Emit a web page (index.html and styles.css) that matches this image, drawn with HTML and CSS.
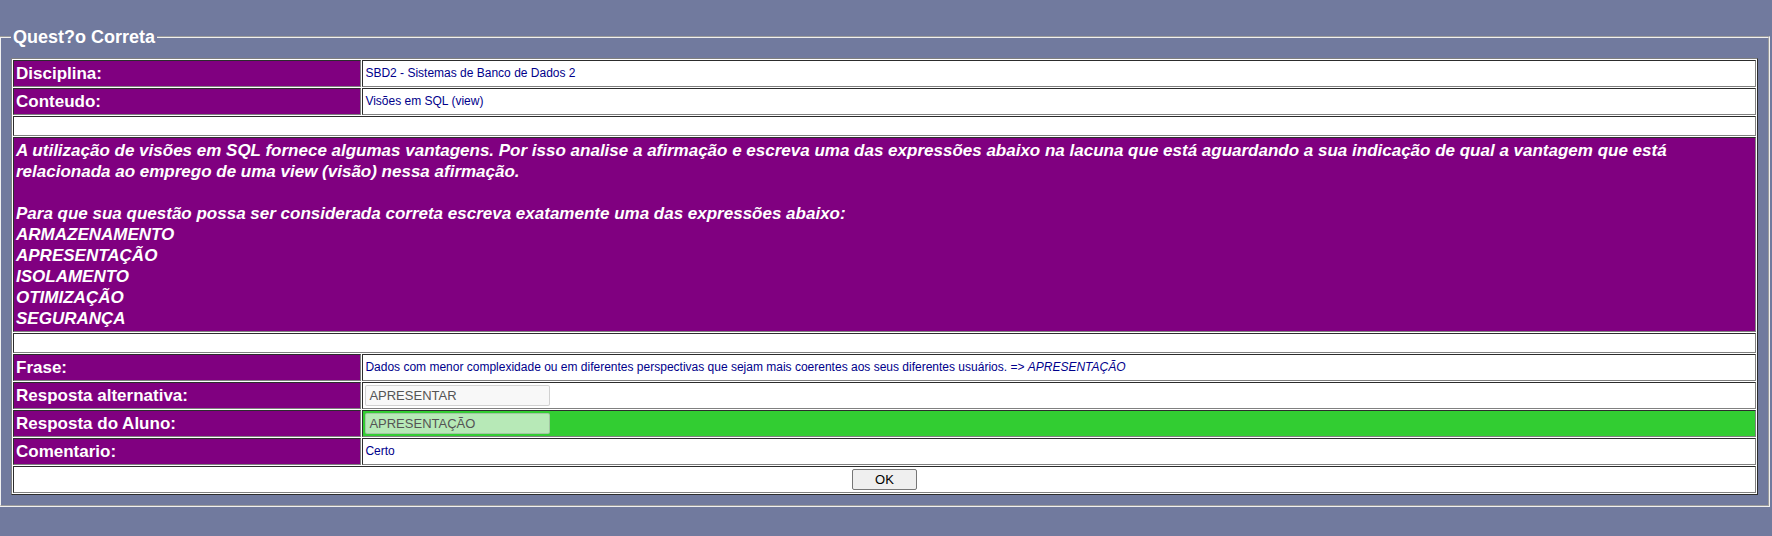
FILE: index.html
```html
<!DOCTYPE html>
<html lang="pt-BR">
<head>
<meta charset="utf-8">
<title>Questão Correta</title>
<link rel="stylesheet" href="styles.css">
</head>
<body>
<form class="page">
<fieldset class="panel">
<legend class="panel-title">Quest?o Correta</legend>
<table class="sheet">
<tbody>
<tr><th class="label" scope="row">Disciplina:</th><td class="value">SBD2 - Sistemas de Banco de Dados 2</td></tr>
<tr><th class="label" scope="row">Conteudo:</th><td class="value">Visões em SQL (view)</td></tr>
<tr><td class="spacer" colspan="2"></td></tr>
<tr><td class="statement" colspan="2">A utilização de visões em SQL fornece algumas vantagens. Por isso analise a afirmação e escreva uma das expressões abaixo na lacuna que está aguardando a sua indicação de qual a vantagem que está relacionada ao emprego de uma view (visão) nessa afirmação.<br><br>Para que sua questão possa ser considerada correta escreva exatamente uma das expressões abaixo:<br>ARMAZENAMENTO<br>APRESENTAÇÃO<br>ISOLAMENTO<br>OTIMIZAÇÃO<br>SEGURANÇA</td></tr>
<tr><td class="spacer" colspan="2"></td></tr>
<tr><th class="label" scope="row">Frase:</th><td class="value">Dados com menor complexidade ou em diferentes perspectivas que sejam mais coerentes aos seus diferentes usuários. =&gt; <em>APRESENTAÇÃO</em></td></tr>
<tr><th class="label" scope="row"><label for="alternativa">Resposta alternativa:</label></th><td class="value"><input class="answer" id="alternativa" type="text" value="APRESENTAR" disabled></td></tr>
<tr><th class="label" scope="row"><label for="aluno">Resposta do Aluno:</label></th><td class="value correct"><input class="answer" id="aluno" type="text" value="APRESENTAÇÃO" disabled></td></tr>
<tr><th class="label" scope="row">Comentario:</th><td class="value">Certo</td></tr>
<tr><td class="actions" colspan="2"><button class="ok" type="button">OK</button></td></tr>
</tbody>
</table>
</fieldset>
</form>
</body>
</html>
```
FILE: styles.css
```css
body {
  margin: 0;
  background: #717a9e;
  color: #00008b;
  font-family: "Liberation Sans", Arial, sans-serif;
  font-size: 12px;
}

.page {
  padding: 26px 2px 0 0;
}

.panel {
  margin: 0 0 0 -1px;
  padding: 10px;
  border: 2px groove #f0f0f0;
}

.panel-title {
  padding: 0 2px;
  color: #fff;
  font-size: 18px;
  font-weight: bold;
  line-height: 22px;
}

.sheet {
  width: 100%;
  border: 1px outset #808080;
  border-spacing: 1px;
  background: #fff;
}

.sheet th,
.sheet td {
  padding: 2px;
  border: 1px inset #808080;
}

.label {
  width: 20%;
  box-sizing: border-box;
  background: #800080;
  color: #fff;
  font-size: 17px;
  line-height: 21px;
  text-align: left;
}

.value {
  line-height: 15px;
}

.spacer {
  height: 14px;
}

.statement {
  background: #800080;
  color: #fff;
  font-size: 17px;
  font-style: italic;
  font-weight: bold;
  line-height: 21px;
}

.correct {
  background: #32cd32;
}

.answer {
  display: block;
  box-sizing: border-box;
  width: 185px;
  height: 21px;
  padding: 1px 3px;
  border: 1px solid rgba(118, 118, 118, 0.3);
  border-radius: 2px;
  background: #f8f8f8;
  color: #545454;
  font-family: inherit;
  font-size: 13px;
}

.correct .answer {
  background: #b7e9b7;
}

.actions {
  text-align: center;
}

.ok {
  display: block;
  box-sizing: border-box;
  width: 65px;
  height: 21px;
  margin: 0 auto;
  padding: 0;
  border: 1px solid #767676;
  border-radius: 2px;
  background: #efefef;
  color: #000;
  font-family: inherit;
  font-size: 13px;
}
```
